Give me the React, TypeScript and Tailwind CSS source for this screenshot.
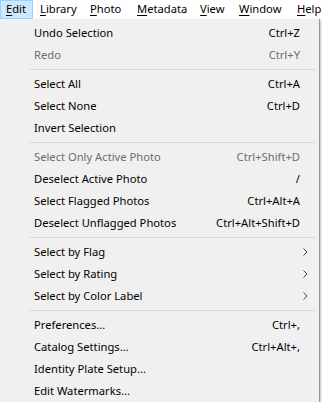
import React from "react";

type Item =
  | { kind: "sep" }
  | { kind: "item"; label: string; shortcut?: string; disabled?: boolean; submenu?: boolean };

const menuBar = [
  { u: "E", rest: "dit", w: "w-[33px]", active: true },
  { u: "L", rest: "ibrary", w: "w-[50px]" },
  { u: "P", rest: "hoto", w: "w-[47px]" },
  { u: "M", rest: "etadata", w: "w-[63px]" },
  { u: "V", rest: "iew", w: "w-[39px]" },
  { u: "W", rest: "indow", w: "w-[58px]" },
  { u: "H", rest: "elp", w: "w-[40px]" },
];

const items: Item[] = [
  { kind: "item", label: "Undo Selection", shortcut: "Ctrl+Z" },
  { kind: "item", label: "Redo", shortcut: "Ctrl+Y", disabled: true },
  { kind: "sep" },
  { kind: "item", label: "Select All", shortcut: "Ctrl+A" },
  { kind: "item", label: "Select None", shortcut: "Ctrl+D" },
  { kind: "item", label: "Invert Selection" },
  { kind: "sep" },
  { kind: "item", label: "Select Only Active Photo", shortcut: "Ctrl+Shift+D", disabled: true },
  { kind: "item", label: "Deselect Active Photo", shortcut: "/" },
  { kind: "item", label: "Select Flagged Photos", shortcut: "Ctrl+Alt+A" },
  { kind: "item", label: "Deselect Unflagged Photos", shortcut: "Ctrl+Alt+Shift+D" },
  { kind: "sep" },
  { kind: "item", label: "Select by Flag", submenu: true },
  { kind: "item", label: "Select by Rating", submenu: true },
  { kind: "item", label: "Select by Color Label", submenu: true },
  { kind: "sep" },
  { kind: "item", label: "Preferences...", shortcut: "Ctrl+," },
  { kind: "item", label: "Catalog Settings...", shortcut: "Ctrl+Alt+," },
  { kind: "item", label: "Identity Plate Setup..." },
  { kind: "item", label: "Edit Watermarks..." },
];

const Chevron = () => (
  <svg width="5" height="8" viewBox="0 0 5 8" className="block">
    <path d="M0.5 0.5 L4 4 L0.5 7.5" fill="none" stroke="#444" strokeWidth="1" />
  </svg>
);

export default function App() {
  return (
    <div
      className="w-[322px] h-[402px] overflow-hidden bg-white text-[11.2px] text-black"
      style={{ fontFamily: '"Segoe UI", "Noto Sans", "Open Sans", sans-serif' }}
    >
      {/* menu bar */}
      <div className="h-[19px] flex items-stretch bg-white whitespace-nowrap text-[11.2px]">
        {menuBar.map((m, i) => (
          <div
            key={i}
            className={
              m.w +
              " shrink-0 flex items-center " +
              (m.active
                ? "pl-[5px] bg-[#cce8ff] border border-[#99d1ff]"
                : "pl-[7px]")
            }
          >
            <span className="underline underline-offset-2">{m.u}</span>
            <span>{m.rest}</span>
          </div>
        ))}
      </div>

      {/* dropdown */}
      <div className="w-[320px] bg-[#f0f0f0] border-r border-[#979797] pt-[3px] h-[383px] shadow-[1px_1px_2px_rgba(0,0,0,0.25)]">
        {items.map((it, i) =>
          it.kind === "sep" ? (
            <div key={i} className="h-[7px] flex items-center pl-[30px] pr-[4px]">
              <div className="w-full border-t border-[#d7d7d7]" />
            </div>
          ) : (
            <div
              key={i}
              className={
                "h-[22px] flex items-center pl-[34px] whitespace-nowrap " +
                (it.disabled ? "text-[#6d6d6d]" : "text-black")
              }
            >
              <span className="flex-1">{it.label}</span>
              {it.shortcut && <span>{it.shortcut}</span>}
              <span className="w-[19px] flex justify-start items-center pl-[3px]">
                {it.submenu && <Chevron />}
              </span>
            </div>
          )
        )}
      </div>
    </div>
  );
}
